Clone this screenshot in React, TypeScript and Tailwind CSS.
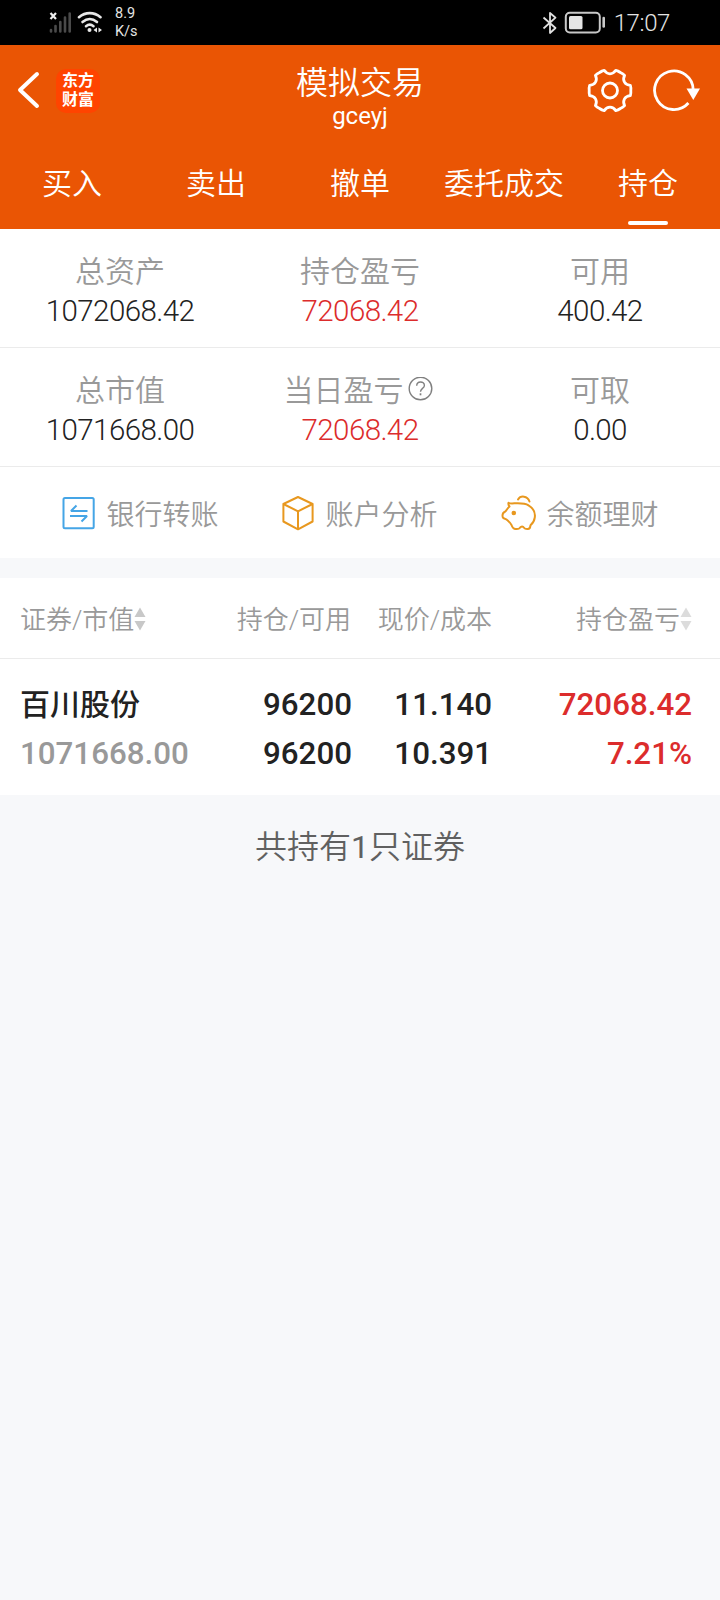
// App.tsx

import React, { FC, ReactNode } from "react";

// --- DATA ---

const tabs = ["买入", "卖出", "撤单", "委托成交", "持仓"];
const activeTab = "持仓";

const assetRows = [
  [
    { label: "总资产", value: "1072068.42" },
    { label: "持仓盈亏", value: "72068.42", up: true },
    { label: "可用", value: "400.42" },
  ],
  [
    { label: "总市值", value: "1071668.00" },
    { label: "当日盈亏", value: "72068.42", up: true, help: true },
    { label: "可取", value: "0.00" },
  ],
];

const holdings = [
  {
    name: "百川股份",
    marketValue: "1071668.00",
    amount: "96200",
    available: "96200",
    price: "11.140",
    cost: "10.391",
    profit: "72068.42",
    profitRate: "7.21%",
  },
];

// --- ICONS ---

const SignalIcon = () => (
  <svg width="24" height="24" viewBox="0 0 24 24" fill="none">
    <path d="M3 19v1.500M7.500 15v5.500M12.300 11v9.500M17 6.500v14M21.700 2.500v18" stroke="#4a4a4a" strokeWidth="2.600" strokeLinecap="round" />
    <path d="M2.500 2l5.500 6M8 2L2.500 8" stroke="#eee" strokeWidth="2.200" />
  </svg>
);

const WifiIcon = () => (
  <svg width="26" height="24" viewBox="0 0 26 24" fill="none">
    <g stroke="#e8e8e8" strokeWidth="2.600" strokeLinecap="round">
      <path d="M3 6.200C9.500 .8 18 .8 24.500 6.200" />
      <path d="M6.500 11C11 7.300 16.500 7.300 21 11" />
      <path d="M10 15.200c2.500-2 5-2 7.500 0" />
    </g>
    <circle cx="13.500" cy="19" r="2" fill="#e8e8e8" />
    <path d="M21 16.500v5l-3.500-2.500zM22.500 16.500v5l3.500-2.500z" fill="#e8e8e8" />
  </svg>
);

const BluetoothIcon = () => (
  <svg width="16" height="24" viewBox="0 0 16 24" fill="none">
    <path d="M1.500 6.500l12 10.500L8 22V2l5.500 4.700-12 10.800" stroke="#e0e0e0" strokeWidth="1.800" strokeLinejoin="round" />
  </svg>
);

const BatteryIcon = () => (
  <svg width="42" height="24" viewBox="0 0 42 24" fill="none">
    <rect x="1.800" y="1.800" width="34" height="19.600" rx="4" stroke="#c8c8c8" strokeWidth="2" />
    <rect x="5" y="5" width="13.500" height="13.200" rx="1.500" fill="#e4e4e4" />
    <path d="M39.700 7v8.500" stroke="#c8c8c8" strokeWidth="2.600" strokeLinecap="round" />
  </svg>
);

const BackIcon = () => (
  <svg width="24" height="40" viewBox="0 0 24 40" fill="none">
    <path d="M21 3L4 19l17 16" stroke="#fff" strokeWidth="4" strokeLinecap="round" strokeLinejoin="round" />
  </svg>
);

// Point on a circle around the gear's centre
const polar = (deg: number, r: number) => {
  const a = (deg * Math.PI) / 180;
  return `${(23 + r * Math.cos(a)).toFixed(2)} ${(22.5 + r * Math.sin(a)).toFixed(2)}`;
};

const gearPath =
  `M${polar(-14, 21)}` +
  [0, 60, 120, 180, 240, 300]
    .map(
      (d) =>
        `Q${polar(d - 8, 21.3)} ${polar(d, 20.8)}Q${polar(d + 8, 21.3)} ${polar(d + 14, 21)}C${polar(d + 20, 15.8)} ${polar(d + 40, 15.8)} ${polar(d + 46, 21)}`
    )
    .join("") +
  "Z";

const GearIcon = () => (
  <svg width="46" height="46" viewBox="0 0 46 46" fill="none" stroke="#fff" strokeWidth="2.800" strokeLinejoin="round">
    <path d={gearPath} />
    <circle cx="23" cy="22.500" r="7.500" />
  </svg>
);

const RefreshIcon = () => (
  <svg width="48" height="46" viewBox="0 0 48 46" fill="none">
    <path d="M41.200 22A19.300 19.300 0 1 0 36.400 35" stroke="#fff" strokeWidth="2.800" />
    <path d="M34.500 20.500H48l-6.700 11.500z" fill="#fff" />
  </svg>
);

const HelpIcon = () => (
  <svg width="26" height="26" viewBox="0 0 26 26" fill="none" stroke="#808080" strokeWidth="1.400">
    <circle cx="12.500" cy="11.500" r="11.300" />
    <path d="M8.700 8.700c.1-5 7.700-4.900 7.700-.3 0 3-3.900 3-3.900 6.300" />
    <path d="M12.500 16.300v2" strokeWidth="1.700" />
  </svg>
);

const TransferIcon = () => (
  <svg width="34" height="34" viewBox="0 0 34 34" fill="none" stroke="#45a5e6" strokeWidth="2">
    <rect x="1.500" y="2" width="30.200" height="30.200" rx="1.500" />
    <path d="M25.500 15H9L14.500 9.500M8 20h17l-5.500 5.500" strokeLinejoin="bevel" />
  </svg>
);

const CubeIcon = () => (
  <svg width="34" height="36" viewBox="0 0 34 36" fill="none" stroke="#e8981f" strokeWidth="2" strokeLinejoin="round">
    <path d="M17 2l14.600 7v17.500L17 34.300 2.400 26.500V9z" />
    <path d="M2.400 9L17 16.300 31.600 9M17 16.300v18" />
  </svg>
);

const PiggyIcon = () => (
  <svg width="36" height="36" viewBox="0 0 36 36" fill="none" stroke="#e8981f" strokeWidth="2" strokeLinejoin="round" strokeLinecap="round">
    <path d="M7.500 7.800c2 1 3.500.8 6 .5 6-.3 10.500-.3 14 2 5 3 7 7 6.300 12-.4 3.500-2 6-4.300 8-.3 2.500-1 3.700-2.500 3.700-2.500 0-3 .2-4-1.300-1-1.500-2.800-1.500-4 0-1 1.500-1.500 1.300-4 1.300-2.500.2-3.500-1-4.500-4-1.500-2.500-3-4-5-5.500-3.500-1.500-4-1.500-4-4s.5-3 2.500-3.800c1.500-1 2-3.200 4.500-5.200-1-1.200-1.500-2-1-3.700z" />
    <path d="M17 4.500c2.500-4.300 9.500-4 11.500 2" />
    <circle cx="12.800" cy="18" r="1.300" fill="#e8981f" />
  </svg>
);

const SortIcon: FC<{ top?: string; bottom?: string }> = ({ top = "#c8c8c8", bottom = "#c8c8c8" }) => (
  <svg className="-mt-[3px]" width="12" height="24" viewBox="0 0 12 24">
    <path d="M6 .5L11.500 10H.5z" fill={top} />
    <path d="M6 23.500L.5 14h11z" fill={bottom} />
  </svg>
);

const actions = [
  { label: "银行转账", icon: <TransferIcon /> },
  { label: "账户分析", icon: <CubeIcon /> },
  { label: "余额理财", icon: <PiggyIcon /> },
];

// --- SUB-COMPONENTS ---

const StatusBar = () => (
  <div className="flex h-[45px] items-center bg-black pl-12 pr-[50px] text-[#e4e4e4]">
    <SignalIcon />
    <div className="ml-1">
      <WifiIcon />
    </div>
    <div className="ml-[13px] pt-px text-[14.5px] leading-[18px]">
      <p>8.9</p>
      <p>K/s</p>
    </div>
    <div className="ml-auto flex items-center">
      <BluetoothIcon />
      <div className="ml-[6px] mr-2">
        <BatteryIcon />
      </div>
      <span className="pt-px text-[24px] font-[350] leading-6 tracking-[-0.4px]">17:07</span>
    </div>
  </div>
);

const Header = () => (
  <header className="h-[184px] bg-[#ea5504] text-white">
    <div className="grid h-[91px] grid-cols-[1fr_auto_1fr] items-center">
      <div className="flex items-center pl-4">
        <BackIcon />
        <div className="ml-4 flex size-11 flex-col items-center justify-center rounded-[10px] bg-[#ff4400] pb-0.5 text-[16px] font-bold leading-[19px]">
          <span>东方</span>
          <span>财富</span>
        </div>
      </div>
      <div className="pt-[13px] text-center">
        <h1 className="text-[32px] font-[350] leading-[38px]">模拟交易</h1>
        <p className="text-[24px] leading-7">gceyj</p>
      </div>
      <div className="flex items-center justify-end gap-[19px] pr-5">
        <GearIcon />
        <RefreshIcon />
      </div>
    </div>
    <nav className="grid h-[93px] grid-cols-5">
      {tabs.map((tab) => (
        <div key={tab} className="flex flex-col items-center justify-between pb-1 pt-7 text-[30px] font-[350] leading-10">
          <span>{tab}</span>
          {tab === activeTab && <i className="h-1 w-10 rounded-full bg-white" />}
        </div>
      ))}
    </nav>
  </header>
);

const AssetCell: FC<{ label: string; value: string; up?: boolean; help?: boolean }> = ({ label, value, up, help }) => (
  <div className="flex flex-col items-center pt-[22px]">
    <div className="flex h-10 items-center text-[30px] font-[350] text-[#999]">
      {label}
      {help && (
        <div className="ml-1 mr-[3px]">
          <HelpIcon />
        </div>
      )}
    </div>
    <p className={`text-[29.5px] font-[350] leading-10 tracking-[-0.6px] ${up ? "text-[#dc2c2c]" : "text-[#222]"}`}>{value}</p>
  </div>
);

const Cell: FC<{ children: ReactNode; className?: string }> = ({ children, className = "" }) => (
  <div className={`flex items-center justify-end pt-1 ${className}`}>{children}</div>
);

// --- MAIN COMPONENT ---

export default function App() {
  return (
    <div className="min-h-[1600px] w-full bg-[#f7f8fa] font-['Roboto','Noto_Sans_CJK_SC',sans-serif]">
      <StatusBar />
      <Header />

      <section className="bg-white">
        {assetRows.map((row, i) => (
          <div key={i} className="grid h-[119px] grid-cols-3 border-b border-[#ebebeb]">
            {row.map((cell) => (
              <AssetCell key={cell.label} {...cell} />
            ))}
          </div>
        ))}
        <div className="flex h-[91px] items-center justify-center gap-[63px] pl-px">
          {actions.map(({ label, icon }) => (
            <div key={label} className="flex items-center gap-[10px] text-[28px] font-[350] text-[#999]">
              {icon}
              <span className="pt-1.5">{label}</span>
            </div>
          ))}
        </div>
      </section>

      <section className="mt-5 bg-white">
        <div className="grid h-[81px] grid-cols-[210px_141px_141px_1fr] border-b border-[#ebebeb] text-[26px] font-[350] text-[#999]">
          <Cell className="justify-start! pl-5">
            证券/市值
            <SortIcon />
          </Cell>
          <Cell>持仓/可用</Cell>
          <Cell>现价/成本</Cell>
          <Cell className="pr-7">
            持仓盈亏
            <SortIcon top="#dcdcdc" bottom="#dcdcdc" />
          </Cell>
        </div>
        {holdings.map((h) => (
          <div key={h.name} className="grid h-[136px] grid-cols-[210px_142px_140px_1fr] pt-[21px] text-right text-[31.3px] font-medium leading-[49px] text-[#222]">
            <div className="pl-5 text-left">
              <p className="text-[30px]">{h.name}</p>
              <p className="text-[#999]">{h.marketValue}</p>
            </div>
            <div>
              <p>{h.amount}</p>
              <p>{h.available}</p>
            </div>
            <div>
              <p>{h.price}</p>
              <p>{h.cost}</p>
            </div>
            <div className="pr-7 text-[#dc2c2c]">
              <p>{h.profit}</p>
              <p>{h.profitRate}</p>
            </div>
          </div>
        ))}
      </section>

      <p className="pt-8 text-center text-[32px] font-[350] leading-10 text-[#606060]">
        共持有<span className="font-normal">{holdings.length}</span>只证券
      </p>
    </div>
  );
}
